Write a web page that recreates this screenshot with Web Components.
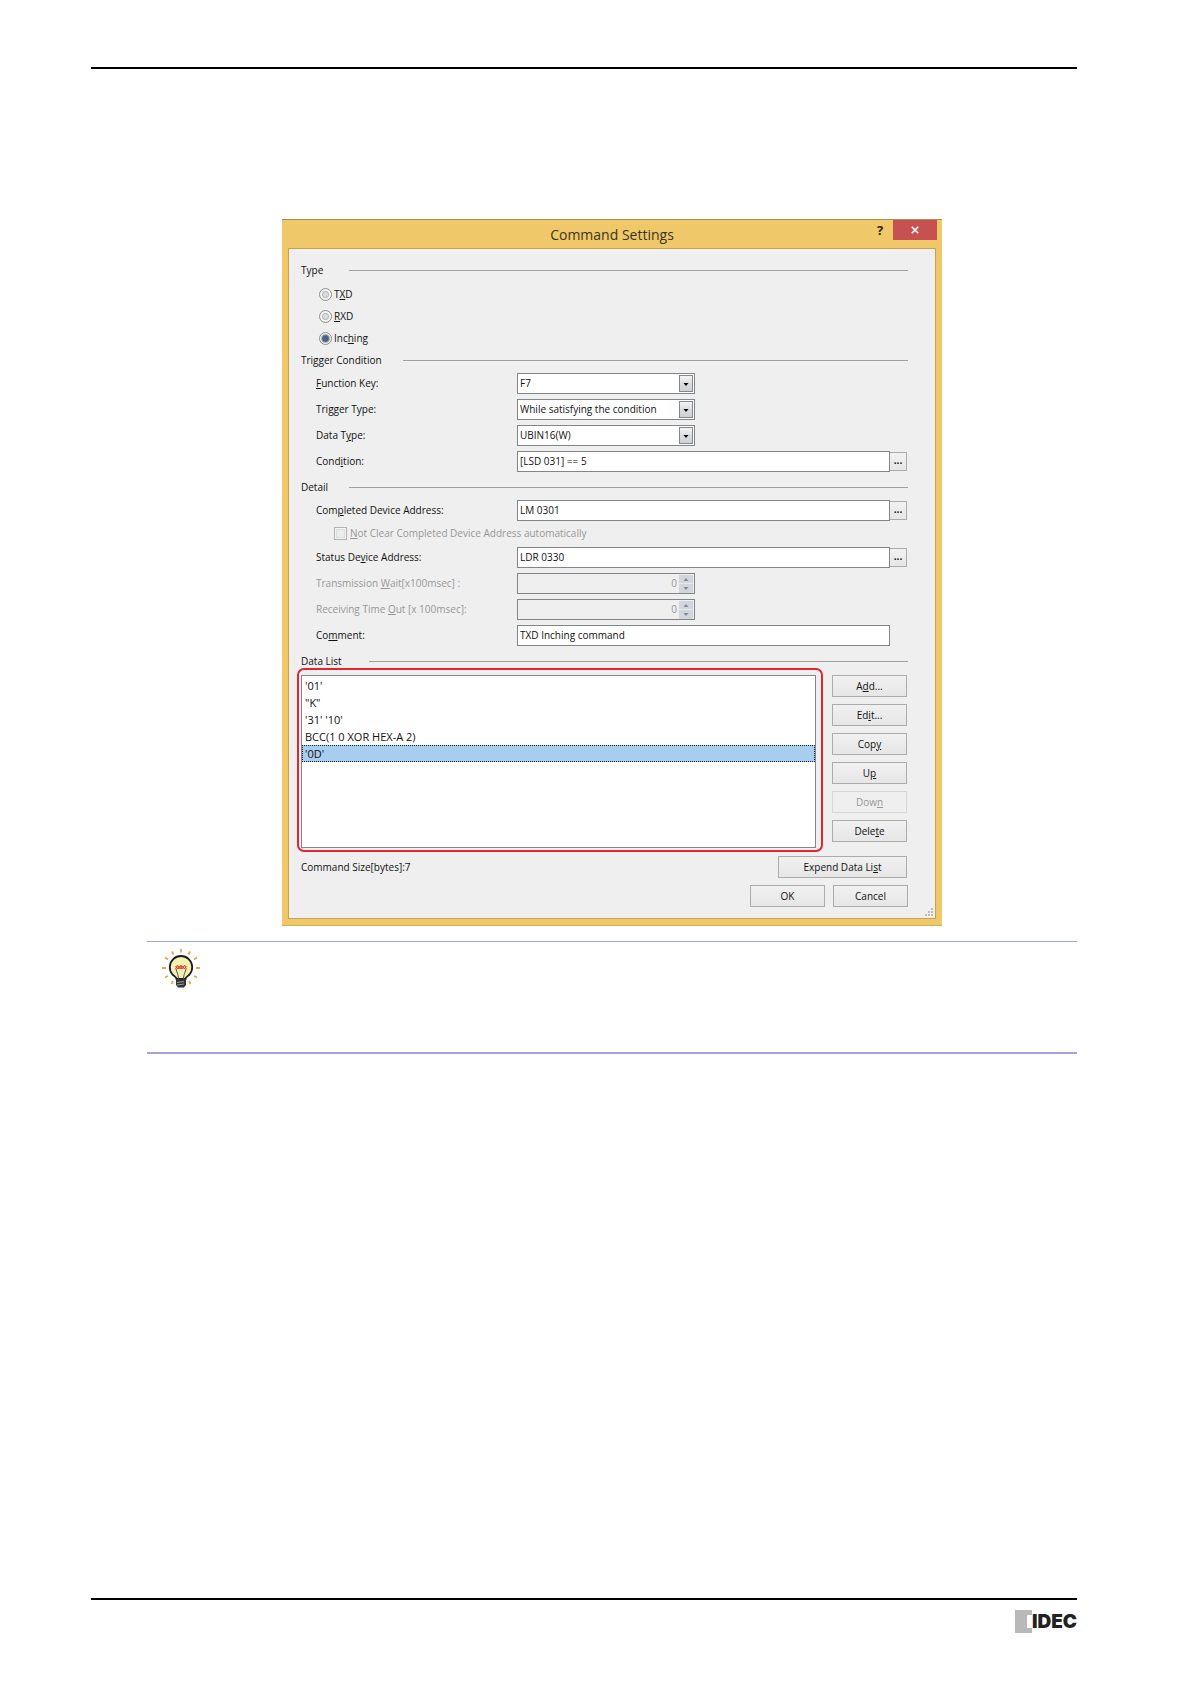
<!DOCTYPE html>
<html lang="en">
<head>
<meta charset="utf-8">
<meta name="viewport" content="width=device-width, initial-scale=1">
<title>Command Settings</title>
<style>
  body {
    margin: 0;
    background: #fff;
    font-family: "Open Sans", "Noto Sans", sans-serif;
    color: #111;
  }
</style>
</head>
<body>
<manual-page>
  <settings-dialog heading="Command Settings">
    <field-group heading="Type" indent="48">
      <radio-group name="type">
        <radio-option>T<u>X</u>D</radio-option>
        <radio-option><u>R</u>XD</radio-option>
        <radio-option checked>Inc<u>h</u>ing</radio-option>
      </radio-group>
    </field-group>

    <field-group heading="Trigger Condition" indent="102">
      <select-field value="F7"><u>F</u>unction Key:</select-field>
      <select-field value="While satisfying the condition">Tri<u>g</u>ger Type:</select-field>
      <select-field value="UBIN16(W)">Data T<u>y</u>pe:</select-field>
      <text-field value="[LSD 031] == 5" browse>Cond<u>i</u>tion:</text-field>
    </field-group>

    <field-group heading="Detail" indent="48">
      <text-field value="LM 0301" browse>Com<u>p</u>leted Device Address:</text-field>
      <check-field disabled><u>N</u>ot Clear Completed Device Address automatically</check-field>
      <text-field value="LDR 0330" browse>Status De<u>v</u>ice Address:</text-field>
      <spin-field value="0">Transmission <u>W</u>ait[x100msec] :</spin-field>
      <spin-field value="0">Receiving Time <u>O</u>ut [x 100msec]:</spin-field>
      <text-field value="TXD Inching command">Co<u>m</u>ment:</text-field>
    </field-group>

    <field-group heading="Data List" indent="68">
      <data-list></data-list>
    </field-group>

    <span slot="status">Command Size[bytes]:7</span>
    <push-button slot="expand">Expend Data Li<u>s</u>t</push-button>
    <push-button slot="actions">OK</push-button>
    <push-button slot="actions">Cancel</push-button>
  </settings-dialog>

  <tip-note slot="note"></tip-note>
  <idec-logo slot="footer"></idec-logo>
</manual-page>

<script>
class ManualPage extends HTMLElement {
  constructor() {
    super();
    this.attachShadow({ mode: 'open' });
    this.shadowRoot.innerHTML = `
      <style>
        :host {
          display: flex;
          flex-direction: column;
          box-sizing: border-box;
          min-height: 100vh;
          padding: 67px 114px 0 91px;
        }
        header { border-top: 2px solid #000; }
        main { padding: 150px 135px 0 191px; }
        aside { margin: 15px 0 40px 56px; }
        footer {
          display: flex;
          justify-content: flex-end;
          margin-top: auto;
          padding: 10px 0 51px;
          border-top: 2px solid #000;
        }
      </style>
      <header></header>
      <main><slot></slot></main>
      <aside><slot name="note"></slot></aside>
      <footer><slot name="footer"></slot></footer>
    `;
  }
}

class SettingsDialog extends HTMLElement {
  connectedCallback() {
    this.attachShadow({ mode: 'open' });
    this.shadowRoot.innerHTML = `
      <style>
        :host {
          display: block;
          padding: 0 6px 6px;
          background: #efc869;
          border-top: 1px solid #a8905a;
          border-bottom: 1px solid #d9ae52;
          font-size: 10px;
          line-height: 15px;
        }
        .title-bar {
          display: grid;
          grid-template-columns: 1fr auto 1fr;
          height: 28px;
        }
        h1 {
          grid-column: 2;
          margin: 0;
          font-size: 14px;
          font-weight: 400;
          line-height: 30px;
          color: #3b3420;
        }
        .tools {
          display: flex;
          justify-content: flex-end;
          align-items: flex-start;
          margin-right: -1px;
        }
        .tools button {
          height: 20px;
          padding: 0;
          border: 0;
          background: none;
          font: bold 13px/20px "Open Sans", sans-serif;
          color: #2a2410;
        }
        .tools .help { width: 26px; }
        .tools .close {
          display: grid;
          place-items: center;
          width: 44px;
          background: #c75050;
        }
        .panel {
          position: relative;
          padding: 14px 27px 11px 12px;
          border: 1px solid #cf9f4c;
          background: #efefef;
        }
        .status-row, .actions {
          display: flex;
          justify-content: space-between;
          align-items: center;
        }
        .status-row { padding-right: 1px; }
        .status-row ::slotted(push-button) { width: 129px; }
        .actions {
          justify-content: flex-end;
          gap: 8px;
          margin-top: 7px;
        }
        .actions ::slotted(push-button) { width: 75px; }
        .grip {
          position: absolute;
          right: 1px;
          bottom: 1px;
        }
      </style>
      <div class="title-bar">
        <h1>${this.getAttribute('heading')}</h1>
        <div class="tools">
          <button class="help" type="button" aria-label="Help">?</button>
          <button class="close" type="button" aria-label="Close">
            <svg width="8" height="8" viewBox="0 0 8 8" stroke="#fff" stroke-width="1.6"><path d="M.8 .8 7.2 7.2M7.2 .8 .8 7.2"/></svg>
          </button>
        </div>
      </div>
      <div class="panel">
        <slot></slot>
        <div class="status-row"><slot name="status"></slot><slot name="expand"></slot></div>
        <div class="actions"><slot name="actions"></slot></div>
        <svg class="grip" width="9" height="9" fill="#bdbdbd"><path d="M6 0h2v2H6zM3 3h2v2H3zM6 3h2v2H6zM0 6h2v2H0zM3 6h2v2H3zM6 6h2v2H6z"/></svg>
      </div>
    `;
  }
}

class FieldGroup extends HTMLElement {
  connectedCallback() {
    this.attachShadow({ mode: 'open' });
    this.shadowRoot.innerHTML = `
      <style>
        :host { display: block; margin-bottom: 8px; }
        h2 {
          display: grid;
          grid-template-columns: ${this.getAttribute('indent')}px 1fr;
          align-items: center;
          height: 15px;
          margin: 0 0 5px;
          font-size: 10px;
          font-weight: 400;
          white-space: nowrap;
        }
        h2::after {
          content: "";
          border-top: 1px solid #a0a0a0;
        }
        .fields {
          display: flex;
          flex-direction: column;
          gap: 5px;
        }
      </style>
      <h2>${this.getAttribute('heading')}</h2>
      <div class="fields"><slot></slot></div>
    `;
  }
}

class RadioGroup extends HTMLElement {
  connectedCallback() {
    this.attachShadow({ mode: 'open' });
    this.shadowRoot.innerHTML = `
      <style>
        :host { display: block; margin: 0 0 -4px 18px; }
      </style>
      <div role="radiogroup" aria-label="Type"><slot></slot></div>
    `;
  }
}

class RadioOption extends HTMLElement {
  connectedCallback() {
    this.attachShadow({ mode: 'open' });
    this.shadowRoot.innerHTML = `
      <style>
        :host { display: block; }
        label {
          display: flex;
          align-items: center;
          gap: 2px;
          height: 22px;
        }
        input {
          appearance: none;
          box-sizing: border-box;
          width: 13px;
          height: 13px;
          margin: 0;
          border: 1px solid #8e8f8f;
          border-radius: 50%;
          background: radial-gradient(circle, #dcdcdc 0 2px, #b8b8b8 3px, #f4f4f4 4px);
        }
        input:checked { background: radial-gradient(circle, #4a6580 0 3px, #5d7389 3px, #f4f4f4 5px); }
      </style>
      <label><input type="radio" name="type" ${this.hasAttribute('checked') ? 'checked' : ''}><span><slot></slot></span></label>
    `;
  }
}

// Layout and box styles shared by every labelled field
const fieldStyles = `
  :host {
    display: grid;
    grid-template-columns: 201px 1fr;
    align-items: center;
    height: 21px;
    margin-left: 15px;
  }
  input, select {
    appearance: none;
    box-sizing: border-box;
    width: 100%;
    height: 21px;
    margin: 0;
    padding: 0 2px 1px;
    border: 1px solid #838688;
    border-radius: 0;
    background: #fff;
    color: #111;
    font: inherit;
  }
`;

class TextField extends HTMLElement {
  connectedCallback() {
    this.attachShadow({ mode: 'open' });
    const browse = this.hasAttribute('browse')
      ? '<button type="button" aria-label="Browse">...</button>'
      : '';
    this.shadowRoot.innerHTML = `
      <style>
        ${fieldStyles}
        .box {
          display: grid;
          grid-template-columns: 1fr 17px;
          align-items: center;
          padding-right: 1px;
        }
        button {
          height: 19px;
          padding: 0 0 3px;
          border: 1px solid #acacac;
          border-left: 0;
          background: linear-gradient(#f2f2f2, #e6e6e6);
          font: bold 10px/12px "Open Sans", sans-serif;
          color: #111;
        }
      </style>
      <label for="field"><slot></slot></label>
      <div class="box"><input id="field" type="text" value="${this.getAttribute('value')}">${browse}</div>
    `;
  }
}

class SelectField extends HTMLElement {
  connectedCallback() {
    this.attachShadow({ mode: 'open' });
    this.shadowRoot.innerHTML = `
      <style>
        ${fieldStyles}
        .box {
          position: relative;
          width: 178px;
        }
        svg {
          position: absolute;
          top: 2px;
          right: 2px;
          box-sizing: border-box;
          border: 1px solid #85888b;
          background: linear-gradient(#f4f4f4, #dcdddf 50%, #cfd1d4);
          pointer-events: none;
        }
      </style>
      <label for="field"><slot></slot></label>
      <div class="box">
        <select id="field"><option>${this.getAttribute('value')}</option></select>
        <svg width="14" height="17" viewBox="0 0 12 15"><path d="M3.500 7h5L6 10z"/></svg>
      </div>
    `;
  }
}

class SpinField extends HTMLElement {
  connectedCallback() {
    this.attachShadow({ mode: 'open' });
    this.shadowRoot.innerHTML = `
      <style>
        ${fieldStyles}
        label { color: #979797; }
        .box {
          position: relative;
          width: 178px;
        }
        input {
          padding-right: 17px;
          background: #efefef;
          color: #979797;
          text-align: right;
        }
        input::-webkit-inner-spin-button { appearance: none; }
        svg {
          position: absolute;
          top: 2px;
          right: 2px;
          background: #d2d6dc;
        }
      </style>
      <label for="field"><slot></slot></label>
      <div class="box">
        <input id="field" type="number" value="${this.getAttribute('value')}" disabled>
        <svg width="14" height="18"><path d="M0 8.500h14" stroke="#e6e8ec"/><path fill="#85898f" d="M4.500 6h5L7 3zM4.500 12h5L7 15z"/></svg>
      </div>
    `;
  }
}

class CheckField extends HTMLElement {
  connectedCallback() {
    this.attachShadow({ mode: 'open' });
    this.shadowRoot.innerHTML = `
      <style>
        :host { display: block; margin: -3px 0 -2px 33px; }
        label {
          display: flex;
          align-items: center;
          gap: 3px;
          height: 21px;
          color: #979797;
        }
        input {
          appearance: none;
          box-sizing: border-box;
          width: 13px;
          height: 13px;
          margin: 0;
          border: 1px solid #b2b2b2;
          background: #ececec;
          box-shadow: inset 0 0 0 1px #f4f4f4, inset 0 0 0 2px #dedede;
        }
      </style>
      <label><input type="checkbox" ${this.hasAttribute('disabled') ? 'disabled' : ''}><span><slot></slot></span></label>
    `;
  }
}

class PushButton extends HTMLElement {
  connectedCallback() {
    this.attachShadow({ mode: 'open' });
    this.shadowRoot.innerHTML = `
      <style>
        :host { display: block; }
        button {
          box-sizing: border-box;
          width: 100%;
          height: 22px;
          padding: 0;
          border: 1px solid #acacac;
          background: linear-gradient(#f1f1f1, #e6e6e6);
          font: inherit;
          line-height: 18px;
          color: #111;
        }
        button:disabled {
          border-color: #d6d6d6;
          background: #efefef;
          color: #979797;
        }
      </style>
      <button type="button" ${this.hasAttribute('disabled') ? 'disabled' : ''}><slot></slot></button>
    `;
  }
}

class DataList extends HTMLElement {
  constructor() {
    super();
    this.attachShadow({ mode: 'open' });
    this.items = [`'01'`, `"K"`, `'31' '10'`, `BCC(1 0 XOR HEX-A 2)`, `'0D'`];
    this.selected = 4;
  }

  connectedCallback() {
    const rows = this.items.map((item, i) =>
      `<li role="option" aria-selected="${i === this.selected}">${item}</li>`).join('');
    this.shadowRoot.innerHTML = `
      <style>
        :host {
          display: grid;
          grid-template-columns: 1fr 75px;
          gap: 16px;
          margin: 1px 1px 0 0;
        }
        .list {
          position: relative;
          border: 1px solid #83878a;
          background: #fff;
        }
        /* Red frame that points out the list */
        .list::after {
          content: "";
          position: absolute;
          inset: -8px -8px -5px -5px;
          border: 2px solid #e0262e;
          border-radius: 7px;
        }
        ul {
          margin: 0;
          padding: 1px 0;
          list-style: none;
          font-size: 11px;
        }
        li {
          height: 15px;
          padding: 0 2px;
          border: 1px solid transparent;
        }
        li[aria-selected="true"] {
          border: 1px dotted #123;
          background: #a8cdef;
        }
        .buttons {
          display: flex;
          flex-direction: column;
          gap: 7px;
          padding: 0 0 6px;
        }
      </style>
      <div class="list"><ul role="listbox" aria-label="Data List">${rows}</ul></div>
      <div class="buttons">
        <push-button>A<u>d</u>d...</push-button>
        <push-button>Ed<u>i</u>t...</push-button>
        <push-button>Cop<u>y</u></push-button>
        <push-button>U<u>p</u></push-button>
        <push-button disabled>Dow<u>n</u></push-button>
        <push-button>Dele<u>t</u>e</push-button>
      </div>
    `;
  }
}

class TipNote extends HTMLElement {
  constructor() {
    super();
    this.attachShadow({ mode: 'open' });
    this.shadowRoot.innerHTML = `
      <style>
        :host {
          display: block;
          box-sizing: border-box;
          min-height: 113px;
          padding: 6px 14px;
          border: solid #a0a4e0;
          border-width: 1px 0 2px;
        }
        svg { display: block; }
      </style>
      <svg width="40" height="42" viewBox="0 0 40 42" fill="none">
        <path stroke="#f0a04a" stroke-width="1.800" d="M20 1v3.500M11 3.500l1.500 3M29 3.500l-1.500 3M4 9.500l3 2M36 9.500l-3 2M1 20h4M35 20h4M4 29.500l3-1.500M36 29.500l-3-1.500M10.500 36l1.500-3M29.500 36l-1.500-3"/>
        <path fill="#f4f0b4" stroke="#1c1c1c" stroke-width="1.800" d="M15.500 31c0-2-2-2.500-4-4.500a11.200 11.200 0 1 1 17 0c-2 2-4 2.500-4 4.500z"/>
        <path stroke="#55553f" stroke-width="1" d="M17.500 31c0-5-2-7-2.500-10M22.500 31c0-5 2-7 2.500-10"/>
        <path stroke="#e0402c" stroke-width="1" d="M14.500 21l2-4 1.500 4 2-4 1.500 4 2-4 2 4M14.500 18l2 3 1.500-3 2 3 1.500-3 2 3 2-3"/>
        <path fill="#333" d="M15 31h10v6l-2 2.500h-6L15 37z"/>
        <path stroke="#aaa" stroke-width=".9" d="M16 34.500l7-1M16 37l7-1"/>
      </svg>
    `;
  }
}

class IdecLogo extends HTMLElement {
  constructor() {
    super();
    this.attachShadow({ mode: 'open' });
    this.shadowRoot.innerHTML = `
      <style>
        :host {
          display: flex;
          align-items: center;
          height: 23px;
          font: 900 19px/23px Inter, sans-serif;
          color: #222;
        }
        svg { display: block; }
      </style>
      <svg width="17" height="23" fill="#b9b9b9"><path d="M0 0h17v5h-5v13h5v5H0z"/></svg>
      <span>IDEC</span>
    `;
  }
}

customElements.define('manual-page', ManualPage);
customElements.define('settings-dialog', SettingsDialog);
customElements.define('field-group', FieldGroup);
customElements.define('radio-group', RadioGroup);
customElements.define('radio-option', RadioOption);
customElements.define('text-field', TextField);
customElements.define('select-field', SelectField);
customElements.define('spin-field', SpinField);
customElements.define('check-field', CheckField);
customElements.define('push-button', PushButton);
customElements.define('data-list', DataList);
customElements.define('tip-note', TipNote);
customElements.define('idec-logo', IdecLogo);
</script>
</body>
</html>
